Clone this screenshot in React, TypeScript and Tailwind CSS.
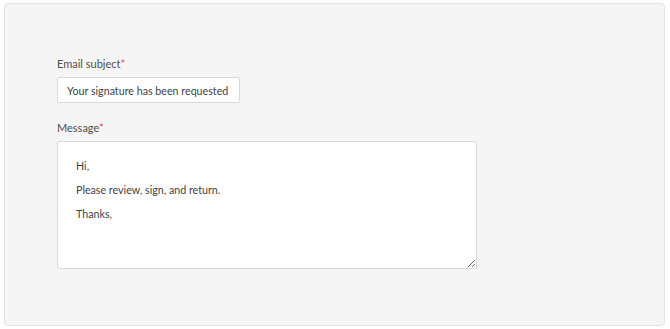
export default function App() {
  const message = "Hi,\n\nPlease review, sign, and return.\n\nThanks,";

  return (
    <div className="w-[670px] h-[329px] bg-white pt-[3px] pl-[4px] font-['Lato',sans-serif] text-[#4a4a4a]">
      <div className="w-[661px] h-[323px] bg-[#f5f5f5] border border-[#e3e3e3] rounded-[4px] pl-[52px] pt-[52px]">
        {/* Email subject */}
        <label className="block text-[11px] leading-[16px] text-[#4d4d4d]">
          Email subject<span className="text-[#e23c7c]">*</span>
        </label>
        <input
          type="text"
          readOnly
          value="Your signature has been requested"
          className="mt-[5px] block w-[183px] h-[26px] bg-white border border-[#d9d9d9] rounded-[2px] pl-[9px] pr-[4px] text-[10.7px] text-[#3f3f3f] outline-none"
        />

        {/* Message */}
        <label className="block mt-[17px] text-[11px] leading-[16px] text-[#4d4d4d]">
          Message<span className="text-[#e23c7c]">*</span>
        </label>
        <textarea
          readOnly
          value={message}
          className="mt-[5px] block w-[420px] h-[128px] bg-white border border-[#d9d9d9] rounded-[2px] pl-[18px] pt-[18px] text-[10.7px] leading-[12px] text-[#3f3f3f] outline-none resize"
        />
      </div>
    </div>
  );
}
